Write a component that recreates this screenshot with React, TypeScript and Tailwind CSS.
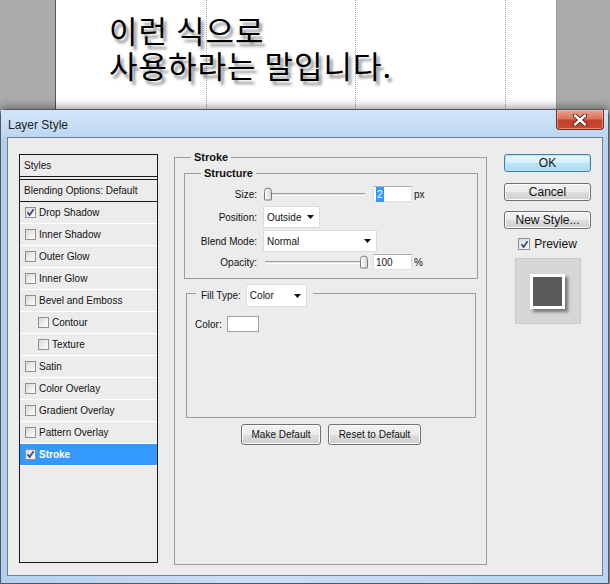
import React from "react"

type StyleItem = {
  label: string
  checked?: boolean
  indent?: boolean
  active?: boolean
}

const styleItems: StyleItem[] = [
  { label: "Drop Shadow", checked: true },
  { label: "Inner Shadow" },
  { label: "Outer Glow" },
  { label: "Inner Glow" },
  { label: "Bevel and Emboss" },
  { label: "Contour", indent: true },
  { label: "Texture", indent: true },
  { label: "Satin" },
  { label: "Color Overlay" },
  { label: "Gradient Overlay" },
  { label: "Pattern Overlay" },
  { label: "Stroke", checked: true, active: true },
]

function CheckBox({ checked, size = "small" }: { checked?: boolean; size?: "small" | "large" }) {
  return (
    <span
      className={
        size === "small"
          ? "flex h-[11px] w-[11px] shrink-0 items-center justify-center border border-[#8f8f8f] bg-[linear-gradient(135deg,#d8d8d8,#ffffff)]"
          : "flex h-[12px] w-[12px] shrink-0 items-center justify-center border border-[#8f8f8f] bg-[linear-gradient(135deg,#d8d8d8,#ffffff)]"
      }
    >
      {checked && (
        <svg width="9" height="9" viewBox="0 0 9 9">
          <path d="M1.5 4.2 L3.6 7 L7.6 1.3" stroke="#3b4680" strokeWidth="1.7" fill="none" />
        </svg>
      )}
    </span>
  )
}

function StylesPanel() {
  return (
    <div className="h-[409px] w-[139px] shrink-0 border border-[#1a1a1a] text-[10px] text-[#111]">
      <div className="flex h-[22px] items-center border-b border-[#1a1a1a] pl-[4px]">Styles</div>
      <div className="mt-[2px] flex h-[23px] items-center border-y border-[#1a1a1a] pl-[4px]">
        Blending Options: Default
      </div>
      {styleItems.map((item) => (
        <div
          key={item.label}
          className={
            (item.active ? "bg-[#3399ff] font-bold text-white " : "") +
            (item.indent ? "pl-[18px] " : "pl-[5px] ") +
            "flex h-[22px] items-center gap-[3px] border-b border-white"
          }
        >
          <CheckBox checked={item.checked} />
          <span>{item.label}</span>
        </div>
      ))}
    </div>
  )
}

function Slider({ thumbLeft }: { thumbLeft: string }) {
  return (
    <div className="relative flex h-full w-[106px] items-center">
      <div className="ml-[2px] h-[3px] w-[100px] border-t border-[#9c9c9c] border-b border-b-white bg-[#e4e4e4]" />
      <div
        className={
          thumbLeft +
          " absolute top-1/2 h-[13px] w-[8px] -translate-y-1/2 rounded-t-[4px] rounded-b-[1px] border border-[#7b7b7b] bg-[linear-gradient(90deg,#ffffff,#d6d6d6)]"
        }
      />
    </div>
  )
}

function TextBox({ children }: { children: React.ReactNode }) {
  return (
    <div className="flex h-[16px] w-[39px] items-center border border-[#dbdfe6] border-t-[#abadb3] bg-white pl-[2px] text-[10px]">
      {children}
    </div>
  )
}

function Select({ value, width }: { value: string; width: string }) {
  return (
    <div
      className={
        width +
        " flex h-full items-center justify-between border border-[#dcdcdc] bg-white pl-[3px] pr-[5px] text-[10px]"
      }
    >
      <span>{value}</span>
      <svg width="7" height="4" viewBox="0 0 7 4">
        <polygon points="0,0 7,0 3.5,4" fill="#111" />
      </svg>
    </div>
  )
}

function SmallButton({ label, width }: { label: string; width: string }) {
  return (
    <div
      className={
        width +
        " flex h-[21px] items-center justify-center rounded-[3px] border border-[#707070] bg-[linear-gradient(#f2f2f2_0%,#ebebeb_50%,#dddddd_51%,#cfcfcf_100%)] text-[10px] shadow-[inset_0_0_0_1px_#fcfcfc]"
      }
    >
      {label}
    </div>
  )
}

function StrokePanel() {
  return (
    <fieldset className="-mt-[3px] ml-[16px] h-[414px] w-[313px] shrink-0 border border-[#9d9d9d] pl-[9px] pr-[8px] text-[10px] text-[#111]">
      <legend className="ml-[7px] px-[3px] text-[11px] font-bold leading-[13px]">Stroke</legend>

      {/* Structure */}
      <fieldset className="mt-[3px] border border-[#9d9d9d] pb-[8px] pt-[6px]">
        <legend className="ml-[16px] px-[3px] text-[11px] font-bold leading-[13px]">Structure</legend>
        <div className="flex h-[16px] items-center">
          <span className="w-[72px] text-right">Size:</span>
          <div className="ml-[6px] flex h-full items-center">
            <Slider thumbLeft="left-[1px]" />
            <div className="ml-[4px]">
              <TextBox>
                <span className="bg-[#3399ff] px-[1px] text-white">2</span>
              </TextBox>
            </div>
            <span className="ml-[2px]">px</span>
          </div>
        </div>
        <div className="mt-[4px] flex h-[22px] items-center">
          <span className="w-[72px] text-right">Position:</span>
          <div className="ml-[6px] h-full">
            <Select value="Outside" width="w-[57px]" />
          </div>
        </div>
        <div className="mt-[2px] flex h-[22px] items-center">
          <span className="w-[72px] text-right">Blend Mode:</span>
          <div className="ml-[6px] h-full">
            <Select value="Normal" width="w-[114px]" />
          </div>
        </div>
        <div className="mt-[2px] flex h-[16px] items-center">
          <span className="w-[72px] text-right">Opacity:</span>
          <div className="ml-[6px] flex h-full items-center">
            <Slider thumbLeft="left-[97px]" />
            <div className="ml-[4px]">
              <TextBox>100</TextBox>
            </div>
            <span className="ml-[2px]">%</span>
          </div>
        </div>
      </fieldset>

      {/* Fill type: the dropdown hangs a little below the legend, as in Photoshop */}
      <fieldset className="ml-[2px] mt-[5px] h-[134px] w-[290px] border border-[#9d9d9d] pl-[8px] pt-[13px]">
        <legend className="ml-[1px] flex h-[19px] items-start pl-[5px] pr-[6px]">
          <span className="mt-[4px]">Fill Type:</span>
          <div className="ml-[5px] h-[23px]">
            <Select value="Color" width="w-[61px]" />
          </div>
        </legend>
        <div className="flex h-[16px] items-center">
          <span>Color:</span>
          <div className="ml-[5px] h-[16px] w-[32px] border border-[#a3a3a3] bg-white" />
        </div>
      </fieldset>

      <div className="mt-[6px] flex justify-center gap-[7px]">
        <SmallButton label="Make Default" width="w-[80px]" />
        <SmallButton label="Reset to Default" width="w-[93px]" />
      </div>
    </fieldset>
  )
}

function BigButton({ label, primary }: { label: string; primary?: boolean }) {
  return (
    <div
      className={
        primary
          ? "flex h-[18px] w-full items-center justify-center rounded-[3px] border border-[#3c7fb1] bg-[linear-gradient(#e8f5fd_0%,#d5eefc_50%,#bde4f8_51%,#a9daf4_100%)] text-[12px] shadow-[inset_0_0_0_1px_#b9e4fb]"
          : "flex h-[18px] w-full items-center justify-center rounded-[3px] border border-[#707070] bg-[linear-gradient(#f2f2f2_0%,#ebebeb_50%,#dddddd_51%,#cfcfcf_100%)] text-[12px] shadow-[inset_0_0_0_1px_#fcfcfc]"
      }
    >
      {label}
    </div>
  )
}

function ActionColumn() {
  return (
    <div className="ml-[17px] flex w-[87px] shrink-0 flex-col items-center text-[#111]">
      <BigButton label="OK" primary />
      <div className="mt-[11px] w-full">
        <BigButton label="Cancel" />
      </div>
      <div className="mt-[10px] w-full">
        <BigButton label="New Style..." />
      </div>
      <div className="mt-[9px] flex h-[12px] items-center gap-[4px] text-[12px]">
        <CheckBox checked size="large" />
        <span>Preview</span>
      </div>
      <div className="mt-[8px] flex h-[66px] w-[66px] items-center justify-center border border-[#cbcbcb] bg-[#d6d6d6]">
        <div className="h-[35px] w-[35px] border-[3px] border-white bg-[#5a5a5a] shadow-[3px_3px_3px_rgba(0,0,0,0.45)]" />
      </div>
    </div>
  )
}

function CloseButton() {
  return (
    <div className="mr-[4px] flex h-[20px] w-[48px] items-center justify-center self-start rounded-b-[4px] border border-t-0 border-[#7a2a20] bg-[linear-gradient(#e9a28f_0%,#d9735b_45%,#c2412a_55%,#c94a33_100%)] shadow-[inset_0_0_0_1px_rgba(255,220,210,0.45)]">
      <svg width="16" height="12" viewBox="0 0 16 12">
        <path d="M3 1.5 L13 10.5 M13 1.5 L3 10.5" stroke="#4a1a12" strokeWidth="4.2" strokeLinecap="round" />
        <path d="M3 1.5 L13 10.5 M13 1.5 L3 10.5" stroke="#ffffff" strokeWidth="2.4" strokeLinecap="round" />
      </svg>
    </div>
  )
}

function Workspace() {
  return (
    <div className="flex h-[109px] bg-[#ababab]">
      <div className="w-[55px] shrink-0" />
      <div className="relative w-[501px] shrink-0 border-l border-[#555555] bg-white pl-[53px] pt-[12px]">
        <div className="absolute bottom-0 left-[150px] top-0 border-l border-dotted border-[#a0a0a0]" />
        <div className="absolute bottom-0 left-[299px] top-0 border-l border-dotted border-[#a0a0a0]" />
        <div className="absolute bottom-0 left-[449px] top-0 border-l border-dotted border-[#a0a0a0]" />
        <div className="relative font-['Noto_Sans_CJK_KR',sans-serif] text-[31px] leading-[35px] tracking-[1px] text-black [text-shadow:3px_4px_3px_rgba(0,0,0,0.45)]">
          <p className="h-[35px]">이런 식으로</p>
          <p className="h-[35px]">사용하라는 말입니다.</p>
        </div>
      </div>
      <div className="flex-1 border-l border-[#9a9a9a]" />
    </div>
  )
}

export default function App() {
  return (
    <div className="h-[584px] w-[610px] overflow-hidden bg-[#ababab] font-['Liberation_Sans',Arial,sans-serif]">
      <Workspace />
      <div className="relative h-[475px] w-[609px] rounded-t-[6px] border border-[#4e5966] bg-[linear-gradient(90deg,#b4cfec,#c9def4_40%,#b9d4ef)] shadow-[0_0_10px_2px_rgba(0,0,0,0.4)]">
        <div className="flex h-[27px] items-center justify-between bg-[linear-gradient(#d3e6f9,#bcd7f3)]">
          <span className="pl-[7px] pt-[3px] text-[12px] text-[#1e1e1e]">Layer Style</span>
          <CloseButton />
        </div>
        <div className="ml-[6px] h-[439px] w-[596px] border border-[#6f7e90] bg-[#ececec]">
          <div className="flex items-start pl-[11px] pt-[16px]">
            <StylesPanel />
            <StrokePanel />
            <ActionColumn />
          </div>
        </div>
      </div>
    </div>
  )
}
